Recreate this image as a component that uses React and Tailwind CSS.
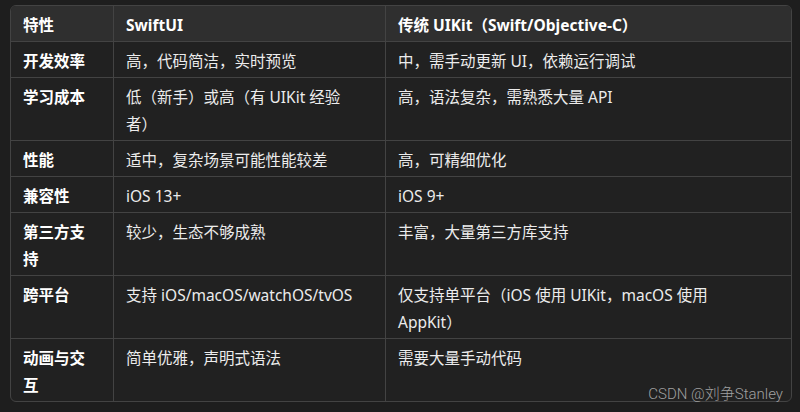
import React from 'react';

const rows = [
    ['开发效率', '高，代码简洁，实时预览', '中，需手动更新 UI，依赖运行调试'],
    ['学习成本', '低（新手）或高（有 UIKit 经验者）', '高，语法复杂，需熟悉大量 API'],
    ['性能', '适中，复杂场景可能性能较差', '高，可精细优化'],
    ['兼容性', 'iOS 13+', 'iOS 9+'],
    ['第三方支持', '较少，生态不够成熟', '丰富，大量第三方库支持'],
    ['跨平台', '支持 iOS/macOS/watchOS/tvOS', '仅支持单平台（iOS 使用 UIKit，macOS 使用 AppKit）'],
    ['动画与交互', '简单优雅，声明式语法', '需要大量手动代码'],
];

const font = { fontFamily: '"Noto Sans", "Noto Sans CJK SC", sans-serif' };

// right padding per column keeps the line breaks where the screenshot has them
const pads = ['pr-[20px] border-r', 'pr-[28px] border-r', 'pr-[50px]'];

function Cell({ children, col, strong, bottom, head }) {
    return (
        <div
            className={
                'pl-3 pt-[6px] pb-[2px] leading-[27px] text-[15.5px] border-[#434343] ' +
                pads[col] + ' ' +
                (bottom ? '' : 'border-b ') +
                (head ? 'bg-[#2f2f2f] ' : '') +
                (strong ? 'font-bold text-white' : 'text-[#ececec]')
            }
        >
            {children}
        </div>
    );
}

export default function App() {
    return (
        <div className="w-[800px] h-[412px] bg-[#1e1e1e] pl-[10px] pt-[5px] relative" style={font}>
            <div className="w-[782px] border border-[#434343] rounded-md overflow-hidden bg-[#212121]">
                <div className="grid grid-cols-[103px_272px_405px]">
                    {['特性', 'SwiftUI', '传统 UIKit（Swift/Objective-C）'].map((h, i) => (
                        <Cell key={h} col={i} head strong>
                            {h}
                        </Cell>
                    ))}
                    {rows.map((r, ri) =>
                        r.map((c, ci) => (
                            <Cell key={ri + '-' + ci} col={ci} strong={ci === 0} bottom={ri === rows.length - 1}>
                                {c}
                            </Cell>
                        ))
                    )}
                </div>
            </div>
            <div
                className="absolute right-[17px] bottom-[8px] text-[15px] leading-[20px] font-light text-[#a0a0a0]"
                style={{ fontFamily: 'Roboto, "Noto Sans CJK SC", sans-serif' }}
            >
                CSDN @刘争Stanley
            </div>
        </div>
    );
}
